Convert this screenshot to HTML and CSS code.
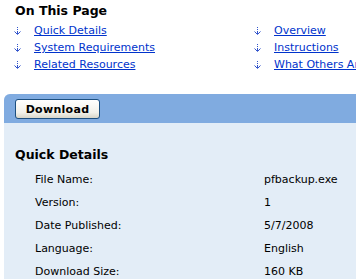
FILE: index.html
```html
<!DOCTYPE html>
<html>
<head>
<meta charset="utf-8">
<link rel="stylesheet" href="styles.css">
</head>
<body>
<div class="otp">
  <h2 class="otp-title">On This Page</h2>
  <ul class="toc">
    <li><svg class="arr" viewBox="0 0 7 8" width="7" height="8"><path d="M3.5 0v1M3.5 2v1M3.5 4v3M0.5 4.5l3 3 3-3" fill="none" stroke="#3355cc" stroke-width="1"/></svg><a href="#">Quick Details</a></li>
    <li><svg class="arr" viewBox="0 0 7 8" width="7" height="8"><path d="M3.5 0v1M3.5 2v1M3.5 4v3M0.5 4.5l3 3 3-3" fill="none" stroke="#3355cc" stroke-width="1"/></svg><a href="#">Overview</a></li>
    <li><svg class="arr" viewBox="0 0 7 8" width="7" height="8"><path d="M3.5 0v1M3.5 2v1M3.5 4v3M0.5 4.5l3 3 3-3" fill="none" stroke="#3355cc" stroke-width="1"/></svg><a href="#">System Requirements</a></li>
    <li><svg class="arr" viewBox="0 0 7 8" width="7" height="8"><path d="M3.5 0v1M3.5 2v1M3.5 4v3M0.5 4.5l3 3 3-3" fill="none" stroke="#3355cc" stroke-width="1"/></svg><a href="#">Instructions</a></li>
    <li><svg class="arr" viewBox="0 0 7 8" width="7" height="8"><path d="M3.5 0v1M3.5 2v1M3.5 4v3M0.5 4.5l3 3 3-3" fill="none" stroke="#3355cc" stroke-width="1"/></svg><a href="#">Related Resources</a></li>
    <li><svg class="arr" viewBox="0 0 7 8" width="7" height="8"><path d="M3.5 0v1M3.5 2v1M3.5 4v3M0.5 4.5l3 3 3-3" fill="none" stroke="#3355cc" stroke-width="1"/></svg><a href="#">What Others Are Downloading</a></li>
  </ul>
</div>
<div class="panel">
  <div class="bar"><button class="btn">Download</button></div>
  <div class="details">
    <h3 class="qd-title">Quick Details</h3>
    <table class="qd">
      <tr><td class="lbl">File Name:</td><td>pfbackup.exe</td></tr>
      <tr><td class="lbl">Version:</td><td>1</td></tr>
      <tr><td class="lbl">Date Published:</td><td>5/7/2008</td></tr>
      <tr><td class="lbl">Language:</td><td>English</td></tr>
      <tr><td class="lbl">Download Size:</td><td>160 KB</td></tr>
    </table>
  </div>
</div>
</body>
</html>
```
FILE: styles.css
```css
html, body {
  margin: 0;
  padding: 0;
  background: #fff;
  overflow: hidden;
}
body {
  width: 356px;
  height: 279px;
  font-family: "DejaVu Sans", Verdana, sans-serif;
  font-size: 11px;
  color: #000;
}
.otp {
  padding: 3px 0 0 15px;
  height: 94px;
  box-sizing: border-box;
}
.otp-title {
  margin: 0;
  font-size: 12.5px;
  font-weight: bold;
  line-height: 16px;
}
.toc {
  list-style: none;
  margin: 3px 0 0 -1px;
  padding: 0;
  display: grid;
  grid-template-columns: 240px 1fr;
  white-space: nowrap;
  overflow: hidden;
}
.toc li {
  height: 17px;
  line-height: 17px;
  display: flex;
  align-items: center;
  overflow: hidden;
}
.arr {
  margin-right: 13px;
  flex: none;
}
.toc a {
  color: #0033cc;
  text-decoration: underline;
}
.panel {
  margin-left: 4px;
  background: #e3edf7;
  border-top-left-radius: 6px;
  height: 185px;
  overflow: hidden;
}
.bar {
  background: #80abe0;
  height: 29px;
  padding: 5px 0 0 11px;
  box-sizing: border-box;
}
.btn {
  width: 85px;
  height: 20px;
  padding: 0;
  font-family: "DejaVu Sans", Verdana, sans-serif;
  font-size: 11px;
  font-weight: bold;
  letter-spacing: 0.3px;
  color: #000;
  border: 1px solid #1c4f80;
  border-radius: 3px;
  background: linear-gradient(#ffffff, #f2f1ea 70%, #d8d5c8);
}
.details {
  padding: 24px 0 0 11px;
}
.qd-title {
  margin: 0 0 5px;
  font-size: 12.5px;
  font-weight: bold;
  line-height: 16px;
}
.qd {
  border-collapse: collapse;
}
.qd td {
  padding: 0;
  height: 23px;
  vertical-align: middle;
}
.qd td.lbl {
  padding-left: 20px;
  width: 229px;
}
```
